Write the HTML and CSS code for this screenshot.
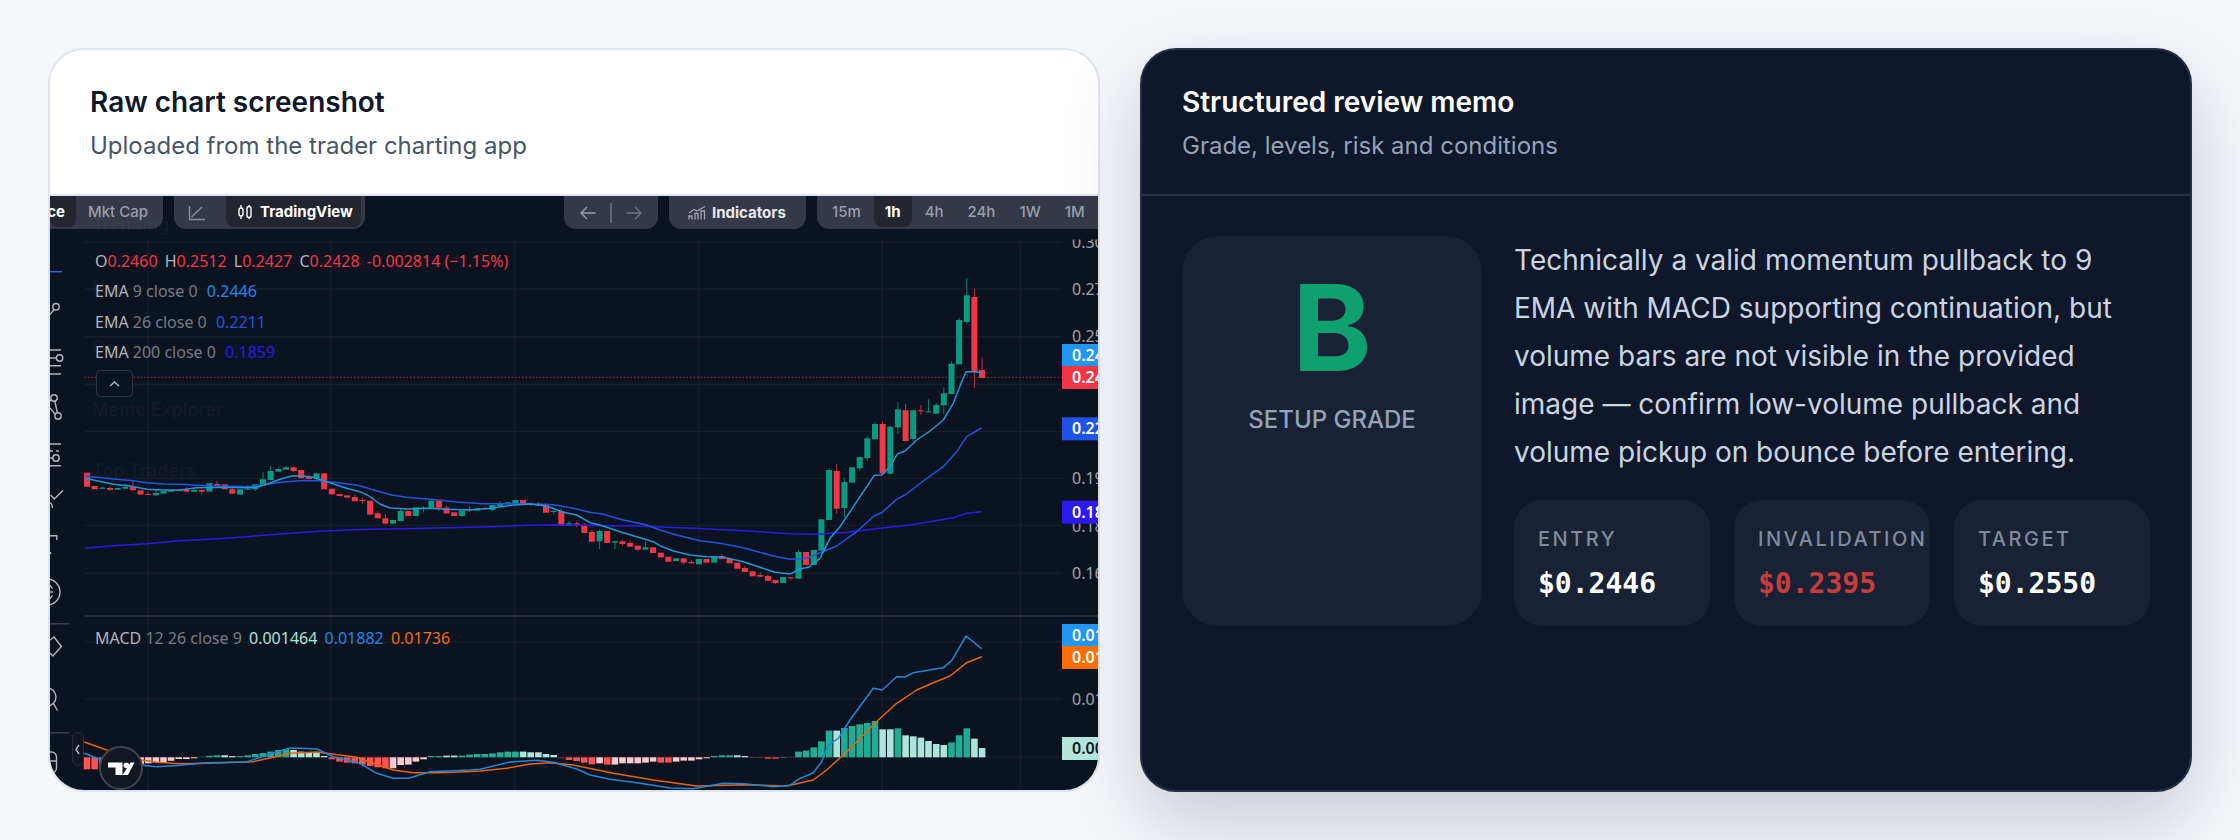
FILE: index.html
```html
<!DOCTYPE html>
<html lang="en">
<head>
    <meta charset="UTF-8">
    <meta name="viewport" content="width=device-width, initial-scale=1.0">
    <title>Chart review</title>
    <link rel="stylesheet" href="styles.css">
</head>
<body>
    <main class="compare">
        <section class="panel panel-raw">
            <header class="panel-head">
                <h2 class="panel-title">Raw chart screenshot</h2>
                <p class="panel-sub">Uploaded from the trader charting app</p>
            </header>
            <div class="chart">
                <svg id="chartPlot" class="chart-plot" viewBox="50 196 1048 594" xmlns="http://www.w3.org/2000/svg">
                    <g class="tool-icons">
                        <path d="M50 271.7h12" stroke="#2962ff"/>
                        <circle cx="56" cy="306.7" r="3.2"/>
                        <path d="M54 309.5l-4 5"/>
                        <path d="M50 350h11M50 358h6.5M50 365.7h11M50 374h11"/>
                        <circle cx="59.6" cy="358" r="3.2"/>
                        <circle cx="54" cy="398" r="3.2"/>
                        <circle cx="58" cy="416" r="3.2"/>
                        <path d="M54.8 401l2.6 12M55 414l-5-6M50 401l2-1"/>
                        <path d="M50 444h11M50 451h3M56 451h3M50 458h3M50 465.7h11"/>
                        <circle cx="56" cy="458" r="3.2"/>
                        <path d="M50.7 495l3.6 4 8.7-8.5M50 503a4 4 0 0 1 2 5"/>
                        <path d="M50 535.7h6.8v4.3M50 552l1 2"/>
                        <circle cx="47" cy="592" r="13"/>
                        <path d="M50 585.5l2.5 3M50 598.5l2.5-3M50 592h3"/>
                        <path d="M50 623.7h19M50 732.7h19" stroke="#3a3e48"/>
                        <path d="M50 640l4-3 7.4 9.5-8.5 9.5-2.9-3"/>
                        <circle cx="47" cy="697" r="9"/>
                        <path d="M53.5 703.5l4 7"/>
                        <path d="M50 752h1.5a5 5 0 0 1 5 5v11a5 5 0 0 1-5 5H50M50 761h6.5"/>
                    </g>
                    <rect class="collapse-pill" x="72.5" y="732.5" width="11" height="33" rx="5"/>
                    <path class="collapse-arrow" d="M79 745l-3 4.500 3 4.500"/>
                    <circle class="tv-badge" cx="121" cy="768" r="21"/>
                    <path class="tv-mark" d="M108 762.500h14.500V775H115.500v-7.500H108z"/>
                    <circle class="tv-mark" cx="126.300" cy="765.300" r="2.800"/>
                    <path class="tv-mark" d="M130.500 762.500h4L128 775h-5.500z"/>
                    <rect class="legend-toggle" x="96.500" y="370.500" width="36" height="26" rx="4"/>
                    <path class="collapse-arrow" d="M110 386l4.500-4 4.500 4"/>
                </svg>

                <div class="tv-bar">
                    <div class="tv-group tv-group-first">
                        <span class="tv-tab tv-tab-cut is-active">Price</span>
                        <span class="tv-tab tv-tab-mcap">Mkt Cap</span>
                    </div>
                    <div class="tv-group tv-group-view">
                        <svg class="tv-icon tv-icon-line" viewBox="0 0 18 16"><path d="M1.500 1v13.500H17M3.500 12L14 2"/></svg>
                        <span class="tv-tab tv-tab-view is-active">
                            <svg class="tv-icon" viewBox="0 0 16 16"><path d="M4 1v2.500M4 12.500V15M12 1v1.500M12 13v2M2 6a2 2 0 0 1 4 0v4a2 2 0 0 1-4 0zM10 4.500a2 2 0 0 1 4 0v7a2 2 0 0 1-4 0z"/></svg>
                            TradingView
                        </span>
                    </div>
                    <div class="tv-group tv-group-nav">
                        <svg class="tv-icon" viewBox="0 0 16 16"><path d="M15.500 8H1M7 2L1 8l6 6"/></svg>
                        <i class="tv-sep"></i>
                        <svg class="tv-icon tv-icon-dim" viewBox="0 0 16 16"><path d="M.5 8H15M9 2l6 6-6 6"/></svg>
                    </div>
                    <div class="tv-group tv-group-ind">
                        <svg class="tv-icon tv-icon-bars" viewBox="0 0 18 14"><path d="M1 13.500V10h3v3.500M7 13.500V7.500h3v6M13 13.500V5h3.500v8.500M1 7l5-3.500 3 1.500L17 .5"/></svg>
                        <span>Indicators</span>
                    </div>
                    <div class="tv-group tv-group-range">
                        <span class="tv-tab">15m</span>
                        <span class="tv-tab is-active">1h</span>
                        <span class="tv-tab">4h</span>
                        <span class="tv-tab">24h</span>
                        <span class="tv-tab">1W</span>
                        <span class="tv-tab">1M</span>
                    </div>
                </div>

                <div class="ghost-nav">
                    <span>Trending</span>
                    <span>New</span>
                    <span>Gainers</span>
                    <span>Meme Explorer</span>
                    <span>Top Traders</span>
                </div>

                <div class="legend legend-price">
                    <div class="legend-row legend-ohlc">
                        <span class="lg-key">O</span><span class="lg-down">0.2460</span>
                        <span class="lg-key lg-gap">H</span><span class="lg-down">0.2512</span>
                        <span class="lg-key lg-gap">L</span><span class="lg-down">0.2427</span>
                        <span class="lg-key lg-gap">C</span><span class="lg-down">0.2428</span>
                        <span class="lg-down lg-gap">-0.002814 (−1.15%)</span>
                    </div>
                    <div class="legend-row"><span class="lg-key">EMA</span> <span class="lg-args">9 close 0</span> <span class="lg-ema9 lg-gap">0.2446</span></div>
                    <div class="legend-row"><span class="lg-key">EMA</span> <span class="lg-args">26 close 0</span> <span class="lg-ema26 lg-gap">0.2211</span></div>
                    <div class="legend-row"><span class="lg-key">EMA</span> <span class="lg-args">200 close 0</span> <span class="lg-ema200 lg-gap">0.1859</span></div>
                </div>
                <div class="legend legend-macd">
                    <div class="legend-row">
                        <span class="lg-key">MACD</span> <span class="lg-args">12 26 close 9</span>
                        <span class="lg-hist lg-gap">0.001464</span>
                        <span class="lg-ema9 lg-gap">0.01882</span>
                        <span class="lg-signal lg-gap">0.01736</span>
                    </div>
                </div>
            </div>
        </section>

        <section class="panel panel-memo">
            <header class="panel-head">
                <h2 class="panel-title">Structured review memo</h2>
                <p class="panel-sub">Grade, levels, risk and conditions</p>
            </header>
            <div class="memo-body">
                <div class="grade-tile">
                    <div class="grade-letter">B</div>
                    <div class="grade-label">SETUP GRADE</div>
                </div>
                <div class="memo-main">
                    <p class="memo-text">Technically a valid momentum pullback to 9 EMA with MACD supporting continuation, but volume bars are not visible in the provided image — confirm low-volume pullback and volume pickup on bounce before entering.</p>
                    <div class="levels">
                        <div class="level">
                            <div class="level-label">ENTRY</div>
                            <div class="level-value">$0.2446</div>
                        </div>
                        <div class="level">
                            <div class="level-label">INVALIDATION</div>
                            <div class="level-value level-risk">$0.2395</div>
                        </div>
                        <div class="level">
                            <div class="level-label">TARGET</div>
                            <div class="level-value">$0.2550</div>
                        </div>
                    </div>
                </div>
            </div>
        </section>
    </main>
    <script src="chart.js"></script>
</body>
</html>
```

FILE: styles.css
```css
* {
    box-sizing: border-box;
}
body {
    margin: 0;
    height: 840px;
    padding: 48px;
    background: #f5f7fb;
    font-family: Inter, "Liberation Sans", sans-serif;
}
.compare {
    display: grid;
    grid-template-columns: 1fr 1fr;
    gap: 40px;
    height: 744px;
}
.panel {
    display: flex;
    flex-direction: column;
    border: 2px solid #dfe5ee;
    border-radius: 36px;
    overflow: hidden;
    background: #fff;
}
.panel-memo {
    border-color: #243044;
    background: #0f172a;
    box-shadow: 0 30px 80px rgba(15, 23, 42, 0.2);
}
.panel-head {
    flex: none;
    height: 146px;
    padding: 34px 40px 0;
    border-bottom: 2px solid #dfe5ee;
}
.panel-memo .panel-head {
    border-bottom-color: #253248;
}
.panel-title {
    margin: 0;
    font-size: 28px;
    line-height: 36px;
    font-weight: 600;
    color: #0f172a;
}
.panel-sub {
    margin: 8px 0 0;
    font-size: 24px;
    line-height: 36px;
    color: #475569;
}
.panel-memo .panel-title {
    color: #fff;
}
.panel-memo .panel-sub {
    color: #94a3b8;
}

/* chart pane */
.chart {
    position: relative;
    flex: 1;
    overflow: hidden;
    background: #0c1320;
}
.chart-plot {
    position: absolute;
    top: 0;
    left: 0;
    width: 100%;
    height: 100%;
}
.tool-icons {
    fill: none;
    stroke: #b2b5be;
    stroke-width: 1.4;
}
.collapse-pill {
    fill: #101622;
    stroke: #2a2e39;
}
.collapse-arrow {
    fill: none;
    stroke: #b2b5be;
    stroke-width: 1.5;
}
.legend-toggle {
    fill: #0c1320;
    stroke: #30343f;
}
.tv-badge {
    fill: #131722;
    stroke: #41454f;
    stroke-width: 2;
}
.tv-mark {
    fill: #fff;
}
.axis-label {
    font: 16px "Noto Sans", sans-serif;
    fill: #a0a3aa;
}
.axis-badge {
    font: 600 16px "Noto Sans", sans-serif;
    fill: #fff;
}
.tv-bar {
    position: absolute;
    top: 0;
    left: 0;
    right: 0;
    display: flex;
    gap: 11px;
    height: 33px;
    font-size: 15px;
    font-weight: 500;
    color: #9a9ea9;
}
.tv-group {
    display: flex;
    align-items: stretch;
    background: #343847;
    border-radius: 0 0 12px 12px;
}
.tv-group-first {
    width: 113px;
    border-bottom-left-radius: 0;
}
.tv-group-view {
    width: 191px;
    padding-left: 14px;
}
.tv-group-nav {
    width: 94px;
    margin-left: 188px;
    padding-left: 16px;
    align-items: center;
    color: #9a9ea9;
}
.tv-group-ind {
    width: 137px;
    padding-left: 19px;
    align-items: center;
    gap: 6px;
    font-weight: 700;
    color: #e8e9ec;
}
.tv-group-range {
    flex: 1;
    padding-left: 4px;
    gap: 2px;
    border-bottom-right-radius: 0;
}
.tv-tab {
    display: flex;
    align-items: center;
    padding: 0 11px;
    height: 31px;
    border-radius: 0 0 8px 8px;
    white-space: nowrap;
}
.tv-tab.is-active {
    background: #23262f;
    color: #fff;
    font-weight: 700;
}
.tv-tab-cut {
    width: 26px;
    overflow: hidden;
    justify-content: flex-end;
}
.tv-tab-mcap {
    padding-left: 12px;
}
.tv-tab-view {
    gap: 7px;
    margin-left: 20px;
    width: 135px;
    font-weight: 600;
}
.tv-icon {
    flex: none;
    width: 16px;
    height: 16px;
    fill: none;
    stroke: currentColor;
    stroke-width: 1.4;
}
.tv-icon-line {
    width: 18px;
    align-self: center;
    stroke: #8b8f9b;
}
.tv-icon-dim {
    color: #6f7380;
}
.tv-icon-bars {
    width: 18px;
    stroke: #a2a5af;
    stroke-width: 1.3;
}
.tv-sep {
    width: 1.5px;
    height: 20px;
    margin: 0 14px;
    background: #61646f;
}
.ghost-nav {
    position: absolute;
    top: 18px;
    left: 42px;
    display: flex;
    flex-direction: column;
    gap: 39.5px;
    font-size: 18px;
    line-height: 22px;
    font-weight: 600;
    color: rgba(255, 255, 255, 0.035);
}
.legend {
    position: absolute;
    left: 45px;
    font-family: "Noto Sans", sans-serif;
    font-size: 16px;
    line-height: 30.6px;
    color: #787b86;
}
.legend-price {
    top: 49.5px;
}
.legend-macd {
    top: 426.5px;
}
.legend-row {
    white-space: nowrap;
}
.lg-key {
    color: #b2b5be;
}
.lg-gap {
    margin-left: 5px;
}
.legend-ohlc .lg-gap {
    margin-left: 3px;
}
.legend-macd .lg-gap {
    margin-left: 3px;
}
.lg-down {
    color: #f23645;
}
.lg-ema9 {
    color: #1e88e5;
}
.lg-ema26 {
    color: #1f55e6;
}
.lg-ema200 {
    color: #2a1ce8;
}
.lg-hist {
    color: #ace5dc;
}
.lg-signal {
    color: #f36a06;
}

/* memo */
.memo-body {
    display: flex;
    gap: 32px;
    padding: 40px;
}
.grade-tile {
    flex: none;
    width: 300px;
    height: 390px;
    padding-top: 32px;
    text-align: center;
    background: #182234;
    border-radius: 36px;
}
.grade-letter {
    font-size: 120px;
    line-height: 120px;
    font-weight: 700;
    color: #0fa06f;
}
.grade-label {
    margin-top: 16px;
    font-size: 24px;
    line-height: 32px;
    font-weight: 500;
    color: #94a3b8;
}
.memo-main {
    flex: 1;
    min-width: 0;
}
.memo-text {
    margin: 0;
    font-size: 28px;
    line-height: 48px;
    color: #cbd5e1;
}
.levels {
    display: grid;
    grid-template-columns: repeat(3, 1fr);
    gap: 24px;
    margin-top: 24px;
}
.level {
    min-width: 0;
    height: 126px;
    padding: 26px 24px 0;
    background: #182234;
    border-radius: 28px;
}
.level-label {
    font-size: 20px;
    line-height: 26px;
    font-weight: 500;
    letter-spacing: 2.5px;
    color: #7f8b9e;
    white-space: nowrap;
}
.level-value {
    margin-top: 14px;
    font-family: "DejaVu Sans Mono", "Liberation Mono", monospace;
    font-size: 28px;
    line-height: 36px;
    font-weight: 700;
    color: #fff;
}
.level-risk {
    color: #c73c3c;
}
```

FILE: chart.js
```js
// Draws the price pane and MACD pane into #chartPlot.
// Everything is in page pixels (the viewBox starts at the chart's corner).
const GREEN = '#089981';
const RED = '#f23645';
const STEP = 7.65;
const barX = (i) => 87 + STEP * i;

// candles traced from the screenshot at 3x: [colour, body top, body bottom, wick top, wick bottom]
const candleRuns = [
    { base: 450, rows: [
        ['r',68,110],['r',108,118],['g',113,116,110],['r',114,119,110,122],['g',114,119],['g',111,116,103],
        ['r',111,121,92],['r',121,134],['r',132,134,125],['g',129,136,118],['g',123,131],['g',120,125],
        ['g',120,123],['r',119,125,112],['g',120,125,112],['r',120,125,118,132],['g',100,125],['r',102,106,93],
        ['r',103,118],['r',118,131,113],['g',118,134],['g',116,118,105],['g',103,118,103,123],['g',88,106,65],
        ['g',63,90,48],['g',57,65,52],['g',52,59,47],['r',52,63,50,66],['r',60,85],['r',81,87,76,90],
        ['g',70,87,70,92],['r',70,118],['r',116,133],['r',132,138],['r',136,143],['r',141,154,134],
        ['r',150,152,143,160],['r',152,194],['r',190,205,184]
    ] },
    { base: 480, rows: [
        ['r',115,131,102,134],['g',120,131],['g',93,123,85],['r',93,108],['g',82,108],['g',83,86,78,98],
        ['g',62,83],['r',62,83,62,92],['r',83,100,77],['r',97,108],['g',92,108,92,110],['g',88,91,78,96],
        ['g',85,92],['r',85,88,81],['g',75,90,75,93],['g',70,78,64],['g',67,70,67,78],['g',60,70],
        ['r',60,73],['r',71,74,68,78],['r',71,76,66],['r',77,98],['g',93,96,88,103],['r',93,138,85],
        ['g',130,138,123],['r',130,134,126,142],['r',134,159,130],['r',156,185,150],['g',153,184,148,207],
        ['r',153,189],['g',184,188,184,207],['r',184,192,180,197],['r',189,200,183],['r',197,209,197,212],
        ['g',202,209,185],['r',202,219]
    ] },
    { base: 260, rows: [
        ['r',878,892],['r',890,905],['g',895,903],['r',895,908,895,913],['r',906,910,900],['g',897,913],
        ['r',897,908],['g',888,908],['r',888,897,882],['r',895,910],['r',908,926],['r',924,936,918],
        ['r',934,949],['r',945,950,938],['r',948,962,943],['r',960,969,960,972],['g',951,969],['r',952,954,952,960],
        ['g',876,956,870],['r',876,915],['g',870,915],['g',778,872,778,890],['g',630,780,625],['r',633,746,612,762],
        ['g',666,744,655,772],['g',622,668],['g',591,625,591,632],['g',535,594,528,602],['g',492,538,487],['r',492,641,484],
        ['g',500,641,497,644],['g',448,502,426,522],['r',451,543,432,546],['g',451,537,448,545],['r',451,453,435,465],['g',454,456,418,456],
        ['g',435,461,429],['g',400,436,382,462],['g',311,402,304],['g',180,313,174],['g',106,186,54,192],['r',111,335,85,383]
    ] },
    { base: 180, rows: [['r',570,594,532]] }
];

// MACD histogram height in px from the zero line: [height, kind]
// g strong green, l pale green, r strong red, p pale red
const histBars = [
    [-12,'r'],[-12,'r'],[-10,'r'],[-10,'r'],[-8,'r'],[-8,'r'],[-7,'p'],[-7,'p'],[-6,'p'],[-5,'p'],
    [-5.5,'p'],[-3.5,'p'],[-1.7,'p'],[-1.7,'p'],[-1,'p'],[0.7,'g'],[1.5,'g'],[2,'g'],[2,'l'],[1.2,'l'],
    [1.2,'g'],[2,'g'],[3.3,'g'],[4.3,'g'],[5.7,'g'],[7.3,'g'],[8,'g'],[7.3,'l'],[5.7,'l'],[4.7,'l'],
    [4.7,'l'],[1.3,'l'],[-2,'r'],[-4.3,'r'],[-5.3,'r'],[-6,'r'],[-7.3,'r'],[-8.7,'r'],[-10,'r'],[-11,'r'],
    [-11,'p'],[-7.7,'p'],[-7.3,'p'],[-4.3,'p'],[-2,'p'],[1.3,'g'],[1.3,'g'],[1.7,'l'],[1.7,'l'],[1.7,'g'],
    [2.7,'g'],[3.3,'g'],[3.3,'g'],[4,'g'],[5,'g'],[5.7,'g'],[5.7,'g'],[5.7,'l'],[5,'l'],[5,'l'],
    [3.3,'l'],[2.3,'l'],[-1,'r'],[-2.7,'r'],[-3.7,'r'],[-5.3,'r'],[-7,'r'],[-6,'p'],[-7.3,'r'],[-7.3,'p'],
    [-6,'p'],[-6,'p'],[-6,'p'],[-5.3,'p'],[-4.3,'p'],[-5.3,'r'],[-5.3,'r'],[-4.3,'p'],[-3.3,'p'],[-3.3,'p'],
    [-2,'p'],[-1,'p'],[1.3,'g'],[2,'g'],[2,'g'],[2,'l'],[1.3,'l'],[-0.7,'r'],[-0.7,'r'],[-1.3,'r'],
    [-1.3,'r'],[-0.7,'p'],[0.5,'g'],[5.7,'g'],[6.7,'g'],[10,'g'],[16,'g'],[26.7,'g'],[26.7,'l'],[29.3,'g'],
    [31.3,'g'],[33,'g'],[34.3,'g'],[36.3,'g'],[28,'l'],[28,'l'],[29,'g'],[22,'l'],[21,'l'],[19.7,'l'],
    [16.3,'l'],[13.3,'l'],[12.3,'l'],[15,'g'],[22,'g'],[29,'g'],[18.7,'l'],[9.3,'l']
];
const histColours = { g: '#22ab94', l: '#ace5dc', r: '#ff5252', p: '#fccbcd' };
const dimBars = { 87: 1, 88: 1, 91: 1, 92: 1, 62: 1, 15: 1 };

// line traces: runs of x,y pairs at 3x with the page offset they were measured from
const trace = (x0, y0, list) => {
    const out = [];
    for (let i = 0; i < list.length; i += 2) {
        out.push((x0 + list[i] / 3).toFixed(1) + ',' + (y0 + list[i + 1] / 3).toFixed(1));
    }
    return out;
};

const ema9 = [
    ...trace(80, 450, [15,85,50,92,100,103,150,108,200,118,250,120,300,120,350,113,430,112,500,113,530,112,560,103,600,88,635,78,670,78,700,82,740,95,800,115,845,127,870,140]),
    ...trace(370, 480, [0,50,30,72,60,84,110,87,180,85,230,88,300,90,360,85,430,75,480,72,530,78,580,97,620,105,660,128,690,135,750,155,800,170,850,185]),
    ...trace(660, 260, [0,857,40,873,90,885,140,890,190,892,250,905,300,922,345,937,390,942,420,927,445,922,480,895,510,835,540,800,600,710,643,646,665,645,690,620,712,582,735,573,770,540,810,513,850,480,880,430,905,365,918,335,950,335,964,339])
];
const ema26 = [
    ...trace(80, 450, [15,78,50,82,100,87,160,92,200,98,250,102,300,103,380,107,450,109,510,110,560,103,610,96,660,92,720,92,760,97,830,105,860,113]),
    ...trace(370, 480, [0,27,30,35,65,45,110,52,180,58,260,66,340,71,420,71,480,71,550,74,610,85,660,97,700,103,760,120,830,135]),
    ...trace(660, 260, [0,810,50,825,120,842,180,850,250,863,340,888,390,898,440,895,500,870,530,858,590,815,643,767,665,758,710,718,735,705,790,663,850,620,890,575,920,530,964,504])
];
const ema200 = [
    ...trace(80, 450, [15,295,100,287,200,281,300,272,400,267,500,260,600,252,720,244,800,240,870,238]),
    ...trace(370, 480, [0,148,100,146,200,144,360,140,470,136,560,134,700,137,800,138,850,140]),
    ...trace(660, 260, [0,801,100,805,250,812,390,821,470,823,560,817,660,805,750,795,880,773,920,760,964,755])
];
const macd = [
    ...trace(40, 720, [133,100,180,118,300,135,350,140,420,136,500,128,620,126,680,105,750,84,830,87,880,110,960,130,1010,160,1060,175,1105,175,1170,155,1290,150]),
    ...trace(480, 720, [0,148,90,126,170,121,220,127,290,147,330,165,390,178,480,190,570,204,640,206,730,190,790,191,880,200,930,196,955,178,1000,158,1025,125,1045,75,1075,55,1110,0]),
    ...trace(600, 440, [820,745,847,750,890,710,915,711,940,698,1000,688,1030,683,1055,662,1098,588,1145,626])
];
const signal = [
    ...trace(40, 720, [133,66,200,90,305,120,350,127,420,131,500,130,640,125,700,112,750,100,830,96,950,112,1000,130,1060,150,1120,158,1190,158,1280,155]),
    ...trace(480, 720, [0,153,80,145,150,132,210,128,280,135,400,160,520,180,650,198,790,194,920,198,1000,180,1040,150,1100,95,1195,0]),
    ...trace(600, 440, [890,790,950,750,1000,728,1050,708,1100,668,1145,650])
];

const gridY = [242.3, 289, 336.7, 384.3, 431.6, 478.4, 525.4, 573.3, 642, 699, 757];
const gridX = [148, 331, 515, 699, 882, 1020.5];
const axisLabels = [[242.3,'0.30'],[289,'0.27'],[336.7,'0.25'],[478.5,'0.19'],[526,'0.18'],[573,'0.16'],[699,'0.01']];
const badges = [
    [500.7, 23, '#2c19ee', '0.1859', '#fff'],
    [417.3, 23, '#1f55e6', '0.2211', '#fff'],
    [344, 22, '#2196f3', '0.2446', '#fff'],
    [366, 23, '#f23645', '0.2428', '#fff'],
    [624, 22, '#2196f3', '0.01882', '#fff'],
    [646, 23, '#ff6d00', '0.01736', '#fff'],
    [737, 23, '#b2e5dc', '0.00146', '#131722']
];

const parts = [];

gridY.forEach((y) => {
    parts.push(`<path d="M84.6 ${y}H1062" stroke="#171d2a" stroke-width="1.4"/>`);
});
gridX.forEach((x) => {
    parts.push(`<path d="M${x} 240V790" stroke="#171d2a" stroke-width="1.4"/>`);
});
parts.push('<path d="M84.6 616H1098" stroke="#272b37" stroke-width="2"/>');
parts.push('<path d="M84.6 377.3H1062" stroke="#f23645" stroke-width="1" stroke-dasharray="1.500 2" opacity="0.7"/>');

axisLabels.forEach(([y, text]) => {
    parts.push(`<text class="axis-label" x="1072" y="${y + 5.5}">${text}</text>`);
});
// the top label runs under the toolbar's shadow strip in the source app
parts.push('<rect x="1062" y="229" width="36" height="10.500" fill="#0c1320"/>');

// histogram goes under the lines
const zero = 757.3;
histBars.forEach(([h, kind], i) => {
    const top = h > 0 ? zero - h : zero;
    const op = dimBars[i] ? 0.45 : 1;
    parts.push(`<rect x="${(barX(i) - 3.3).toFixed(1)}" y="${top.toFixed(1)}" width="6.6" height="${Math.abs(h)}" fill="${histColours[kind]}" opacity="${op}"/>`);
});

// candles
let idx = 0;
candleRuns.forEach((run) => {
    run.rows.forEach(([c, top, bottom, wickTop, wickBottom]) => {
        const colour = c === 'g' ? GREEN : RED;
        const x = barX(idx);
        const yTop = run.base + top / 3;
        const yBottom = run.base + bottom / 3;
        const wTop = wickTop === undefined ? yTop : run.base + wickTop / 3;
        const wBottom = wickBottom === undefined ? yBottom : run.base + wickBottom / 3;
        if (wTop < yTop || wBottom > yBottom) {
            parts.push(`<path d="M${x.toFixed(1)} ${wTop.toFixed(1)}V${wBottom.toFixed(1)}" stroke="${colour}" stroke-width="1" opacity="0.8"/>`);
        }
        parts.push(`<rect x="${(x - 3).toFixed(1)}" y="${yTop.toFixed(1)}" width="6" height="${Math.max(yBottom - yTop, 1).toFixed(1)}" fill="${colour}"/>`);
        idx++;
    });
});

const line = (points, colour) => `<polyline points="${points.join(' ')}" fill="none" stroke="${colour}" stroke-width="1.500" stroke-linejoin="round"/>`;
parts.push(line(ema200, '#2a1ce8'));
parts.push(line(ema26, '#1f55e6'));
parts.push(line(ema9, '#2196d8'));
parts.push(line(signal, '#e8650a'));
parts.push(line(macd, '#1e88d8'));

badges.forEach(([y, h, fill, text, ink]) => {
    parts.push(`<rect x="1062" y="${y}" width="36" height="${h}" fill="${fill}"/>`);
    parts.push(`<text class="axis-badge" x="1072" y="${y + h / 2 + 5.5}" style="fill:${ink}">${text}</text>`);
});

document.getElementById('chartPlot').insertAdjacentHTML('afterbegin', parts.join(''));
```
